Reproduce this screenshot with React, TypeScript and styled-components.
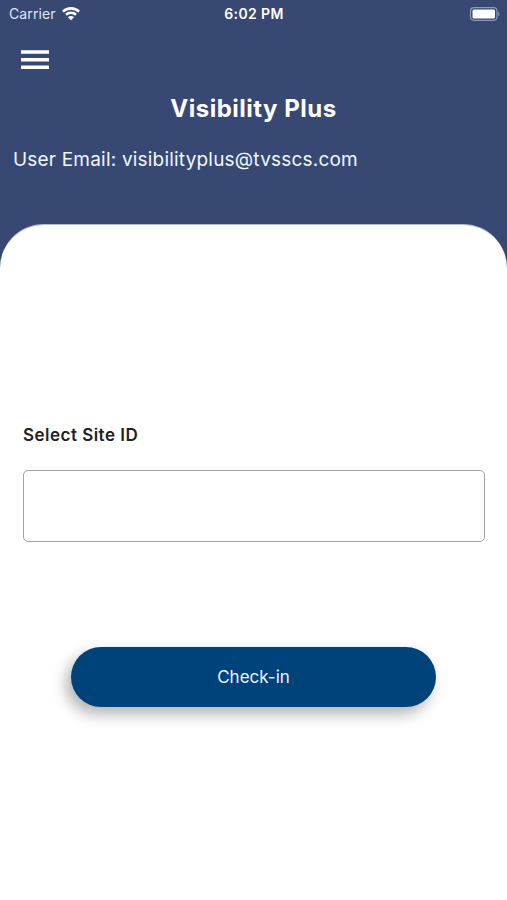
import React from "react";
import styled, { createGlobalStyle } from "styled-components";

const GlobalStyle = createGlobalStyle`
  * { box-sizing: border-box; }
  body { margin: 0; background: #374973; font-family: Inter, "Liberation Sans", sans-serif; }
`;

const Screen = styled.div`
  display: flex;
  flex-direction: column;
  height: 900px;
  overflow: hidden;
  background: #374973;
  color: #fff;
`;

const StatusBar = styled.header`
  display: grid;
  grid-template-columns: 1fr auto 1fr;
  align-items: center;
  height: 28px;
  padding: 0 7px 0 9px;
  font-size: 14px;
  line-height: 20px;
`;

const Carrier = styled.div`
  display: flex;
  align-items: center;
  gap: 6px;
  color: #dfe6f5;
  font-size: 14px;
  letter-spacing: 0.1px;
`;

const Clock = styled.div`
  margin-right: 1px;
  font-size: 14px;
  font-weight: 600;
  letter-spacing: 0.4px;
`;

const BatteryIcon = styled.svg`
  display: block;
  justify-self: end;
`;

const MenuButton = styled.button`
  display: flex;
  align-self: flex-start;
  margin: 22px 0 0 21px;
  padding: 0;
  border: 0;
  background: none;
`;

const Title = styled.h1`
  margin: 23px 0 0;
  font-size: 24px;
  font-weight: 700;
  line-height: 32px;
  letter-spacing: 0.5px;
  text-align: center;
`;

const Email = styled.p`
  margin: 22px 0 0 13px;
  font-size: 19px;
  line-height: 26px;
  letter-spacing: 0.2px;
  color: #f2f6ff;
`;

const Sheet = styled.main`
  flex: none;
  display: flex;
  flex-direction: column;
  height: 676px;
  margin-top: 51px;
  padding: 199px 22px 0 23px;
  border-top: 1px solid #b4bbce;
  border-radius: 44px 44px 0 0;
  background: #fff;
`;

const Label = styled.label`
  font-size: 17px;
  font-weight: 600;
  line-height: 22px;
  letter-spacing: 0.48px;
  color: #222;
`;

const SiteField = styled.input`
  width: 100%;
  height: 72px;
  margin-top: 24px;
  padding: 0 16px;
  border: 1px solid #a3a3a3;
  border-radius: 5px;
  background: #fff;
  font: inherit;
  outline: 0;
`;

const CheckInButton = styled.button`
  width: 365px;
  height: 60px;
  margin: 105px 0 0 48px;
  padding: 0;
  border: 0;
  border-radius: 30px;
  background: #00427a;
  box-shadow: -5px 7px 15px rgba(0, 0, 0, 0.3);
  color: #eef6ff;
  font: 400 17px/24px Inter, "Liberation Sans", sans-serif;
  letter-spacing: 0;
`;

const WifiIcon = () => (
  <svg width="18" height="14" viewBox="0 0 18 14" fill="none" stroke="#fff" strokeWidth="2.6">
    <path d="M.9 4.6C5.4.3 12.6.3 17.1 4.6" />
    <path d="M4 7.8C6.8 5.1 11.2 5.1 14 7.8" />
    <path d="M9 13.3 5.9 10.2C7.6 8.5 10.4 8.5 12.1 10.2Z" fill="#fff" stroke="none" />
  </svg>
);

export default function App() {
  return (
    <>
      <GlobalStyle />
      <Screen>
        <StatusBar>
          <Carrier>
            <span>Carrier</span>
            <WifiIcon />
          </Carrier>
          <Clock>6:02 PM</Clock>
          <BatteryIcon width="31" height="14" viewBox="0 0 31 14">
            <rect x="1.5" y=".7" width="26.5" height="12.6" rx="3.5" fill="none" stroke="#8d9abb" strokeWidth="1.2" />
            <rect x="3.5" y="2.4" width="22.5" height="9.2" rx="1.5" fill="#fff" />
            <path d="M29.2 4.8C31 5.6 31 8.4 29.2 9.2Z" fill="#8d9abb" />
          </BatteryIcon>
        </StatusBar>
        <MenuButton type="button" aria-label="Menu">
          <svg width="28" height="20" viewBox="0 0 28 20" fill="#fff">
            <path d="M0 .3H28V3.7H0ZM0 8H28V11.4H0ZM0 15.6H28V19H0Z" />
          </svg>
        </MenuButton>
        <Title>Visibility Plus</Title>
        <Email>User Email: visibilityplus@tvsscs.com</Email>
        <Sheet>
          <Label htmlFor="site">Select Site ID</Label>
          <SiteField id="site" />
          <CheckInButton type="button">Check-in</CheckInButton>
        </Sheet>
      </Screen>
    </>
  );
}
